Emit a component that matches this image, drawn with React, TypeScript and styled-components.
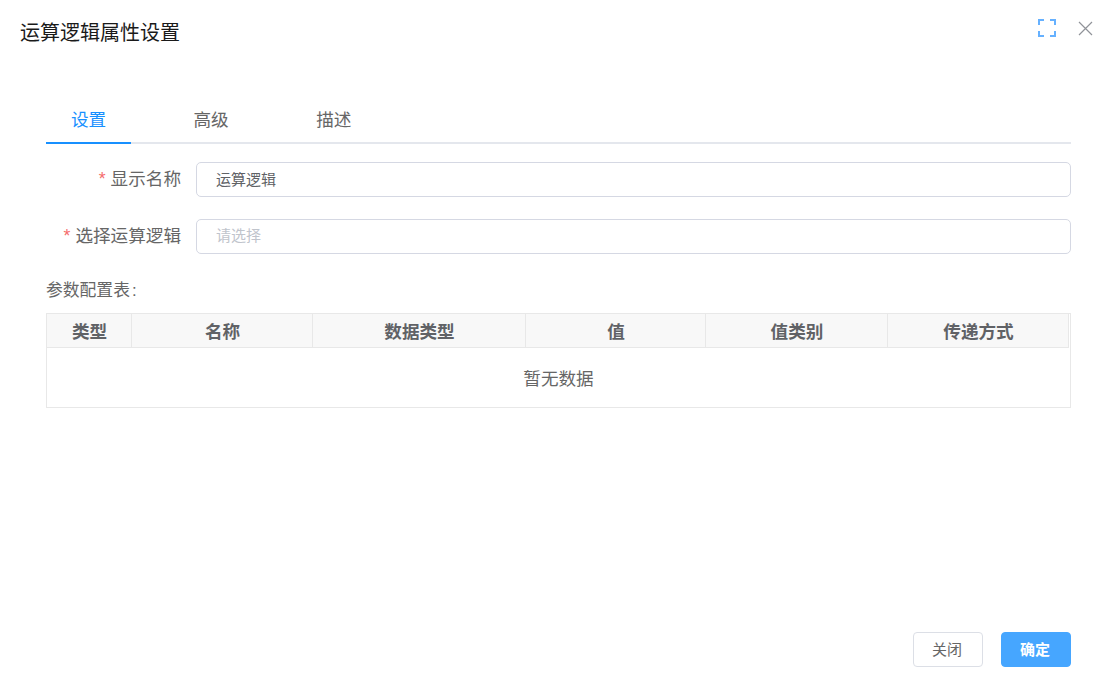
import React from "react";
import styled, { createGlobalStyle } from "styled-components";

const Global = createGlobalStyle`
  html, body { margin: 0; padding: 0; background: #fff; }
  body { font-family: "Liberation Sans", "Noto Sans CJK SC", sans-serif; }
  * { box-sizing: border-box; }
`;

const Dialog = styled.div`
  width: 1114px;
  height: 690px;
  display: flex;
  flex-direction: column;
  background: #fff;
  overflow: hidden;
`;

const Header = styled.header`
  height: 64px;
  padding: 19px 21px 0 20px;
  display: flex;
  justify-content: space-between;
  align-items: flex-start;
`;

const Title = styled.h1`
  margin: 0;
  font-size: 20px;
  line-height: 28px;
  font-weight: 400;
  color: #1a1a1a;
`;

const HeaderIcons = styled.div`
  display: flex;
  align-items: center;
  gap: 22px;
  height: 18px;
`;

const Body = styled.main`
  flex: 1;
  padding: 30px 43px 0 46px;
  display: flex;
  flex-direction: column;
`;

const Tabs = styled.nav`
  display: flex;
  height: 50px;
  border-bottom: 2px solid #e4e7ed;
`;

const Tab = styled.div<{ $active?: boolean }>`
  width: ${(p) => (p.$active ? "85px" : "auto")};
  padding: 0 25px;
  margin-right: 37.5px;
  height: 50px;
  line-height: 53px;
  font-size: 17.6px;
  white-space: nowrap;
  color: ${(p) => (p.$active ? "#1890ff" : "#666")};
  border-bottom: 2px solid ${(p) => (p.$active ? "#1890ff" : "transparent")};
`;

const Row = styled.div`
  display: flex;
  align-items: center;
  height: 35px;
  margin-top: 18px;
  & + & { margin-top: 22px; }
`;

const Label = styled.label`
  width: 135px;
  margin-right: 15px;
  padding-bottom: 5px;
  text-align: right;
  font-size: 17.6px;
  color: #666;
  white-space: nowrap;
`;

const Star = styled.span`
  color: #f56c6c;
  margin-right: 5px;
`;

const Input = styled.input`
  flex: 1;
  height: 35px;
  padding: 0 19px 3px;
  border: 1px solid #d5d8e3;
  border-radius: 5px;
  font-family: inherit;
  font-size: 15px;
  color: #606266;
  background: #fff;
  outline: none;
  &::placeholder { color: #c0c4cc; opacity: 1; }
`;

const SectionLabel = styled.div`
  margin-top: 25px;
  font-size: 16.8px;
  line-height: 24px;
  color: #666;
`;

const Colon = styled.span`
  margin-left: 2px;
`;

const Table = styled.div`
  margin-top: 10px;
  border: 1px solid #e8e8e8;
  height: 95px;
`;

const HeadRow = styled.div`
  display: grid;
  grid-template-columns: 85px 181px 213px 180px 182px 181px;
  grid-template-rows: 34px;
  height: 34px;
`;

const HeadCell = styled.div`
  background: #f8f8f8;
  border-right: 1px solid #e8e8e8;
  border-bottom: 1px solid #e8e8e8;
  padding-left: 1px;
  text-align: center;
  font-size: 17.6px;
  font-weight: 700;
  line-height: 37px;
  height: 34px;
  overflow: hidden;
  color: #606266;
  white-space: nowrap;
`;

const Empty = styled.div`
  height: 59px;
  line-height: 63px;
  text-align: center;
  font-size: 17.6px;
  color: #666;
`;

const Footer = styled.footer`
  display: flex;
  justify-content: flex-end;
  gap: 18px;
  padding: 0 43px 23px 0;
`;

const Button = styled.button<{ $primary?: boolean }>`
  width: 70px;
  height: 35px;
  padding: 0 2px 3px 0;
  border-radius: 4px;
  border: 1px solid ${(p) => (p.$primary ? "#46a6ff" : "#dcdfe6")};
  background: ${(p) => (p.$primary ? "#46a6ff" : "#fff")};
  color: ${(p) => (p.$primary ? "#fff" : "#666")};
  font-family: inherit;
  font-size: 15px;
  font-weight: ${(p) => (p.$primary ? 700 : 400)};
`;

const columns = ["类型", "名称", "数据类型", "值", "值类别", "传递方式"];

export default function App() {
  return (
    <Dialog>
      <Global />
      <Header>
        <Title>运算逻辑属性设置</Title>
        <HeaderIcons>
          <svg width="18" height="18" viewBox="0 0 18 18" fill="none" stroke="#66b1ff" strokeWidth="2">
            <path d="M1 6V1h5M12 1h5v5M17 12v5h-5M6 17H1v-5" />
          </svg>
          <svg width="15" height="18" viewBox="0 0 15 18" fill="none" stroke="#909399" strokeWidth="1.2">
            <path d="M1 3l13 13M14 3L1 16" />
          </svg>
        </HeaderIcons>
      </Header>
      <Body>
        <Tabs>
          <Tab $active>设置</Tab>
          <Tab>高级</Tab>
          <Tab>描述</Tab>
        </Tabs>
        <Row>
          <Label><Star>*</Star>显示名称</Label>
          <Input defaultValue="运算逻辑" />
        </Row>
        <Row>
          <Label><Star>*</Star>选择运算逻辑</Label>
          <Input placeholder="请选择" />
        </Row>
        <SectionLabel>参数配置表<Colon>:</Colon></SectionLabel>
        <Table>
          <HeadRow>
            {columns.map((c) => <HeadCell key={c}>{c}</HeadCell>)}
          </HeadRow>
          <Empty>暂无数据</Empty>
        </Table>
      </Body>
      <Footer>
        <Button>关闭</Button>
        <Button $primary>确定</Button>
      </Footer>
    </Dialog>
  );
}
